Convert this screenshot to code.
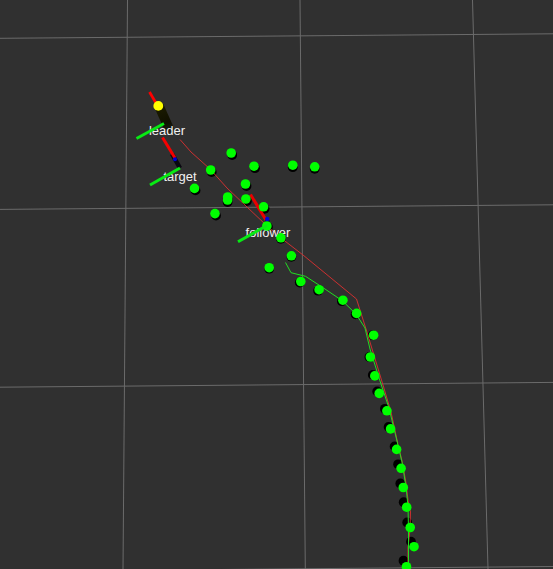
const GRID = [
  [0, 38.3, 553, 33.8],
  [0, 209.4, 553, 204.8],
  [0, 387.2, 553, 382.4],
  [0, 571.5, 553, 566.5],
  [127.5, 0, 123, 569],
  [300, 0, 305.3, 569],
  [472.5, 0, 488, 569],
];

// Each marker: centre x, centre y, shadow offset x, shadow offset y
const MARKERS = [
  [231.2, 153, 1, 2],
  [254, 166.2, 1, 2],
  [292.8, 165.2, 0, 2],
  [314.7, 166.8, 0, 2],
  [210.7, 170, 1, 2],
  [194.5, 188.4, 1, 2],
  [245.5, 184, 1, 2],
  [227.7, 197, 0, 2],
  [227.6, 200, 0, 2],
  [245.9, 199, 1, 2],
  [263.6, 206.8, 1, 2],
  [215, 213.6, 1, 2],
  [266.9, 226, 1, 1],
  [280.9, 237.8, 0, 1],
  [291.4, 255.8, 0, 1],
  [269.2, 267.7, 0, 1],
  [300.8, 281.5, -1, 1],
  [319.1, 289.7, -1, 1],
  [342.9, 300.2, -1, 1],
  [356.6, 313.4, -1, 1],
  [373.6, 335.2, -1, 0],
  [370.4, 357, -1, 0],
  [374.8, 375.9, -2, -1],
  [379.2, 393.4, -2, -2],
  [386.9, 410.8, -2, -2],
  [390.6, 428.9, -2, -2],
  [396.6, 449.4, -2, -3],
  [401.1, 468.3, -3, -4],
  [403.3, 487.5, -3, -4],
  [406.7, 507.2, -3, -5],
  [410.2, 527.5, -3, -5],
  [414, 546.7, -3, -5],
  [406.5, 566.7, -3, -6],
];

export default function App() {
  return (
    <main className="min-h-screen w-full overflow-hidden bg-[#303030]">
      <svg
        viewBox="0 0 553 569"
        className="block h-auto w-full"
        role="img"
        aria-label="Leader and follower trajectories"
      >
        <defs>
          <linearGradient id="trail" x1="158" y1="106" x2="172" y2="134" gradientUnits="userSpaceOnUse">
            <stop offset="0" stopColor="#1c1c00" />
            <stop offset="0.6" stopColor="#101000" />
            <stop offset="0.8" stopColor="#181810" />
            <stop offset="1" stopColor="#282824" />
          </linearGradient>
        </defs>

        <g stroke="#6b6b6b" strokeWidth="1">
          {GRID.map(([x1, y1, x2, y2], i) => (
            <line key={i} x1={x1} y1={y1} x2={x2} y2={y2} />
          ))}
        </g>

        <path d="M159 106 L171 133" stroke="url(#trail)" strokeWidth="9.5" />
        <path d="M149.5 92 L156 103" stroke="#ff0000" strokeWidth="2.7" />
        <path d="M172 154 L180 168" stroke="#080810" strokeWidth="4.5" />

        <g fill="#000000">
          {MARKERS.map(([x, y, dx, dy], i) => (
            <circle key={i} cx={x + dx} cy={y + dy} r="4.9" />
          ))}
        </g>

        <polyline
          points="180,139.5 191,152 210,169 227,188 266,225 281,238 303,255 356.5,299 366,329 383,385 391,412 397,440 402,461 406,483 408,500 410.5,512 410,529 408,548 408,569"
          fill="none"
          stroke="#dc3030"
          strokeWidth="0.9"
        />
        <polyline
          points="285.5,262.5 291,272.7 305.5,276.3 322,287 342,300.5 356,314 365,328 370,349 380,381 389,408 396,437 402,462 406,487 408,506 408.5,530 408.5,569"
          fill="none"
          stroke="#22dc22"
          strokeWidth="1"
        />

        <g fill="#f0f0f0" textAnchor="middle" className="font-['Liberation_Sans',sans-serif] text-[13px]">
          <text x="167" y="135">leader</text>
          <text x="180" y="181">target</text>
          <text x="268" y="237">follower</text>
        </g>

        <g fill="none" strokeWidth="3">
          <path d="M162.5 137.5 L175 158" stroke="#f50000" />
          <path d="M136.5 138.5 L164 123.5" stroke="#08ea14" />
          <path d="M150 185 L180 168" stroke="#08ea14" />
          <path d="M250.5 194.5 L266 220" stroke="#e80000" />
          <path d="M267.5 220 L267 226" stroke="#000020" strokeWidth="4" />
        </g>
        <circle cx="175" cy="159.3" r="2" fill="#0000d8" />
        <circle cx="267.2" cy="219" r="2.2" fill="#0000d8" />

        <g fill="#00ff00">
          {MARKERS.map(([x, y], i) => (
            <circle key={i} cx={x} cy={y} r="4.8" />
          ))}
        </g>
        <path d="M238 241.8 L267 225.5" stroke="#08ea14" strokeWidth="3" />
        <circle cx="158.3" cy="105.9" r="4.9" fill="#ffff00" />
      </svg>
    </main>
  );
}
